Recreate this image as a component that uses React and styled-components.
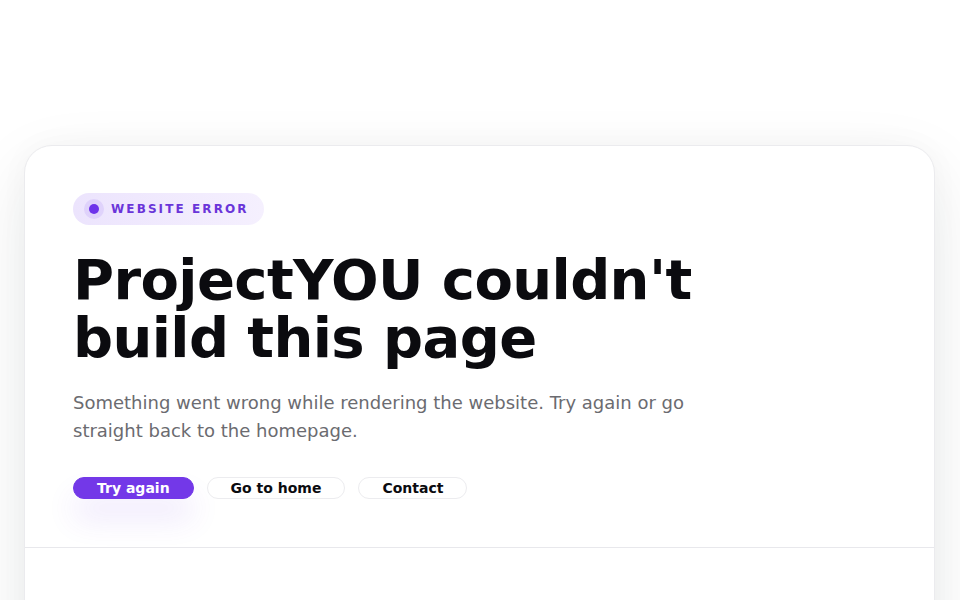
import React from "react";
import styled, { createGlobalStyle } from "styled-components";

const Global = createGlobalStyle`
  html, body {
    margin: 0;
    background: #ffffff;
    font-family: "DejaVu Sans", "Noto Sans", sans-serif;
  }
  * { box-sizing: border-box; }
`;

const Page = styled.div`
  min-height: 600px;
  padding: 145px 25px 0 24px;
  overflow: hidden;
`;

const Card = styled.div`
  background: #ffffff;
  border: 1px solid #ebebee;
  border-radius: 28px;
  box-shadow: 0 24px 70px rgba(20, 30, 30, 0.09), 0 0 30px rgba(20, 30, 30, 0.03);
  min-height: 520px;
`;

const Hero = styled.section`
  padding: 47px 48px 48px;
  border-bottom: 1px solid #e8e8ec;
`;

const Badge = styled.div`
  display: inline-flex;
  align-items: center;
  gap: 12px;
  height: 32px;
  padding: 0 15px 0 16px;
  border-radius: 999px;
  background: linear-gradient(90deg, #ece4fd, #f5f0fe);
  color: #6a35d9;
  font-size: 12px;
  font-weight: 700;
  letter-spacing: 2.1px;
`;

const Dot = styled.span`
  width: 10px;
  height: 10px;
  border-radius: 50%;
  background: #6d33ea;
  box-shadow: 0 0 0 5px rgba(124, 72, 240, 0.12);
`;

const Title = styled.h1`
  margin: 26px 0 0;
  font-size: 56px;
  line-height: 58px;
  font-weight: 700;
  letter-spacing: -0.6px;
  color: #0b0b0f;
  max-width: 680px;
`;

const Lead = styled.p`
  margin: 22px 0 0;
  max-width: 640px;
  font-size: 18px;
  line-height: 28px;
  color: #6b6b70;
`;

const Actions = styled.div`
  display: flex;
  gap: 13px;
  margin-top: 32px;
`;

const Button = styled.button`
  height: 22px;
  padding: 0 23px;
  border-radius: 999px;
  font-family: inherit;
  font-size: 14px;
  font-weight: 700;
  line-height: 20px;
  cursor: pointer;
  border: 1px solid ${(p) => (p.$primary ? "#7338e8" : "#ececef")};
  background: ${(p) => (p.$primary ? "#7338e8" : "#ffffff")};
  color: ${(p) => (p.$primary ? "#ffffff" : "#0b0b0f")};
  box-shadow: ${(p) =>
    p.$primary ? "0 20px 30px rgba(115, 56, 232, 0.12)" : "none"};
`;

export default function App() {
  return (
    <Page>
      <Global />
      <Card>
        <Hero>
          <Badge>
            <Dot />
            WEBSITE ERROR
          </Badge>
          <Title>ProjectYOU couldn't build this page</Title>
          <Lead>
            Something went wrong while rendering the website. Try again or go
            straight back to the homepage.
          </Lead>
          <Actions>
            <Button $primary>Try again</Button>
            <Button>Go to home</Button>
            <Button>Contact</Button>
          </Actions>
        </Hero>
      </Card>
    </Page>
  );
}
